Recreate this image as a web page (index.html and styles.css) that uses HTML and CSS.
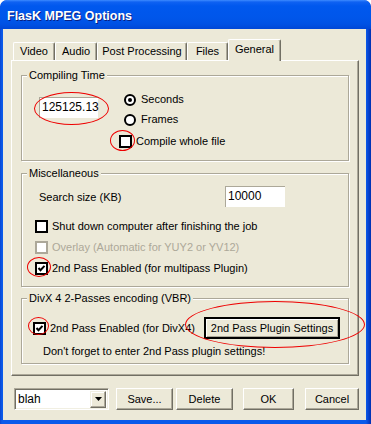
FILE: index.html
```html
<!DOCTYPE html>
<html>
<head>
<meta charset="utf-8">
<link rel="stylesheet" href="styles.css">
</head>
<body>
<div class="window">
  <div class="titlebar"><span class="title">FlasK MPEG Options</span></div>
  <div class="client">
    <div class="tabs">
      <div class="tab t-video">Video</div>
      <div class="tab t-audio">Audio</div>
      <div class="tab t-post">Post Processing</div>
      <div class="tab t-files">Files</div>
      <div class="tab t-general selected">General</div>
    </div>
    <div class="panel">
      <div class="group g1">
        <span class="glabel">Compiling Time</span>
        <div class="g1-body">
          <div class="edit time">125125.13</div>
          <div class="g1-col">
            <div class="opt radio-row r1"><span class="radio on"><span class="dot"></span></span><span>Seconds</span></div>
            <div class="opt radio-row r2"><span class="radio"></span><span>Frames</span></div>
            <div class="opt check-row r3"><span class="check"></span><span>Compile whole file</span></div>
          </div>
        </div>
      </div>
      <div class="group g2">
        <span class="glabel">Miscellaneous</span>
        <div class="search-row">
          <span>Search size (KB)</span>
          <div class="edit size">10000</div>
        </div>
        <div class="opt check-row c1"><span class="check"></span><span>Shut down computer after finishing the job</span></div>
        <div class="opt check-row c2 disabled"><span class="check"></span><span>Overlay (Automatic for YUY2 or YV12)</span></div>
        <div class="opt check-row c3"><span class="check"><svg width="9" height="9" viewBox="0 0 9 9"><polyline points="1.5,4 3.5,6.2 7.5,1.8" fill="none" stroke="#000" stroke-width="2"/></svg></span><span>2nd Pass Enabled (for multipass Plugin)</span></div>
      </div>
      <div class="group g3">
        <span class="glabel">DivX 4 2-Passes encoding (VBR)</span>
        <div class="divx-row">
          <div class="opt check-row"><span class="check"><svg width="9" height="9" viewBox="0 0 9 9"><polyline points="1.5,4 3.5,6.2 7.5,1.8" fill="none" stroke="#000" stroke-width="2"/></svg></span><span>2nd Pass Enabled (for DivX4)</span></div>
          <div class="btn plugin">2nd Pass Plugin Settings</div>
        </div>
        <div class="note">Don't forget to enter 2nd Pass plugin settings!</div>
      </div>
    </div>
    <div class="bottom">
      <div class="combo"><span class="combo-text">blah</span><span class="drop"><svg width="7" height="4" viewBox="0 0 7 4"><polygon points="0,0 7,0 3.5,4" fill="#000"/></svg></span></div>
      <div class="btn b-save">Save...</div>
      <div class="btn b-delete">Delete</div>
      <div class="btn b-ok">OK</div>
      <div class="btn b-cancel">Cancel</div>
    </div>
  </div>
  <span class="mark m1"></span>
  <span class="mark m2"></span>
  <span class="mark m3"></span>
  <span class="mark m4"></span>
  <span class="mark m5"></span>
</div>
</body>
</html>
```
FILE: styles.css
```css
* { box-sizing: border-box; }
html, body { margin: 0; padding: 0; background: #fff; }
body { font-family: "Liberation Sans", Arial, sans-serif; font-size: 11px; color: #000; }

.window {
  position: relative;
  width: 371px;
  height: 424px;
  display: flex;
  flex-direction: column;
  padding: 0 5px 4px 3px;
  background: linear-gradient(to right, #0a45d0 0, #0a5aea 2px, #0a5aea 366px, #0846d4 368px, #0030b0 371px);
  border-radius: 7px 7px 0 0;
  overflow: hidden;
}
.titlebar {
  height: 29px;
  margin: 0 -5px 0 -3px;
  padding: 3px 0 0 7px;
  display: flex;
  align-items: center;
  background: linear-gradient(to bottom, #3d8bff 0, #0f62f2 2px, #0058ee 6px, #0056ea 18px, #0052e4 24px, #0047d6 29px);
  border-radius: 7px 7px 0 0;
}
.title {
  color: #fff;
  font-weight: bold;
  font-size: 12.5px;
  letter-spacing: 0;
  text-shadow: 1px 1px 0 #0a1f80;
}
.client {
  flex: 1;
  background: #ece9d8;
  padding: 10px 0 0 0;
  display: flex;
  flex-direction: column;
}

/* tabs */
.tabs {
  display: flex;
  align-items: flex-end;
  height: 21px;
  margin-left: 10px;
  position: relative;
  z-index: 2;
}
.tab {
  height: 18px;
  line-height: 16px;
  text-align: center;
  background: #ece9d8;
  border-top: 1px solid #fff;
  border-left: 1px solid #fff;
  border-right: 1px solid #716f64;
  box-shadow: inset -1px 0 #aca899;
  border-radius: 2px 2px 0 0;
}
.t-video { width: 42px; }
.t-audio { width: 42px; }
.t-post { width: 90px; }
.t-files { width: 41px; }
.t-general { width: 53px; }
.tab.selected {
  height: 22px;
  margin-bottom: -1px;
  line-height: 18px;
}

.panel {
  margin-left: 8px;
  width: 348px;
  height: 316px;
  border: 1px solid;
  border-color: #fff #716f64 #716f64 #fff;
  box-shadow: inset -1px -1px #aca899;
  padding: 14px 9px 0 9px;
  display: flex;
  flex-direction: column;
  gap: 12px;
}

.group {
  width: 328px;
  border: 1px solid #aca899;
  box-shadow: inset 1px 1px #fff, 1px 1px #fff;
  display: flex;
  flex-direction: column;
}
.g1 { height: 86px; }
.g2 { height: 114px; }
.g3 { height: 66px; margin-top: -1px; }
.glabel {
  align-self: flex-start;
  margin: -7px 0 0 5px;
  padding: 0 2px;
  line-height: 13px;
  background: #ece9d8;
}

.edit {
  background: #fff;
  border-top: 1px solid #aca899;
  border-left: 1px solid #aca899;
  font-size: 11px;
  line-height: 19px;
  padding-left: 2px;
}

.g1-body { display: flex; }
.time {
  margin: 15px 0 0 17px;
  width: 59px;
  height: 21px;
  font-size: 12px;
}
.g1-col {
  margin: 11px 0 0 21px;
  display: flex;
  flex-direction: column;
}
.opt {
  display: flex;
  align-items: center;
  height: 13px;
  line-height: 13px;
  white-space: nowrap;
}
.radio-row { margin-left: 5px; gap: 5px; }
.r2 { margin-top: 7px; }
.r3 { margin-top: 9px; }
.radio {
  width: 12px;
  height: 12px;
  border-radius: 50%;
  border: 2px solid #000;
  background: #fff;
  display: flex;
  align-items: center;
  justify-content: center;
}
.dot { width: 4px; height: 4px; border-radius: 50%; background: #000; }
.check-row { gap: 4px; }
.check {
  width: 13px;
  height: 13px;
  border: 2px solid #000;
  background: #fff;
  display: flex;
  align-items: center;
  justify-content: center;
  flex: none;
}
.check svg { display: block; }
.disabled { color: #aca899; }
.disabled .check { border-color: #aca899; }

.search-row {
  display: flex;
  align-items: center;
  height: 21px;
  margin: 6px 0 0 17px;
}
.size {
  margin-left: auto;
  margin-right: 63px;
  width: 60px;
  height: 21px;
  font-size: 12px;
}
.c1 { margin: 13px 0 0 13px; }
.c2 { margin: 8px 0 0 13px; }
.c3 { margin: 8px 0 0 13px; }

.divx-row {
  display: flex;
  align-items: center;
  height: 22px;
  margin: 12px 0 0 11px;
}
.btn {
  height: 22px;
  display: flex;
  align-items: center;
  justify-content: center;
  background: #ece9d8;
  border: 1px solid;
  border-color: #fff #716f64 #716f64 #fff;
  box-shadow: inset -1px -1px #aca899;
  white-space: nowrap;
}
.plugin {
  margin-left: auto;
  margin-right: 8px;
  width: 136px;
  border: 2px solid #000;
  box-shadow: inset 1px 1px #fff, inset -1px -1px #aca899;
}
.note {
  margin: 6px 0 0 21px;
  line-height: 13px;
}

.bottom {
  display: flex;
  align-items: center;
  margin: 12px 0 0 11px;
  height: 22px;
}
.combo {
  width: 95px;
  height: 22px;
  background: #fff;
  border: 1px solid;
  border-color: #aca899 #fff #fff #aca899;
  box-shadow: inset 1px 1px #716f64, inset -1px -1px #f1efe2;
  display: flex;
  align-items: center;
  padding: 2px;
}
.combo-text { flex: 1; padding-left: 1px; font-size: 12px; }
.drop {
  width: 16px;
  height: 17px;
  background: #ece9d8;
  border: 1px solid;
  border-color: #f1efe2 #716f64 #716f64 #f1efe2;
  box-shadow: inset -1px -1px #aca899, inset 1px 1px #fff;
  display: flex;
  align-items: center;
  justify-content: center;
}
.drop svg { display: block; }
.b-save { width: 57px; margin-left: 7px; }
.b-delete { width: 57px; margin-left: 3px; }
.b-ok { width: 51px; margin-left: 10px; }
.b-cancel { width: 54px; margin-left: 11px; }

/* red annotation ellipses */
.mark {
  position: absolute;
  border: 1px solid #ee0000;
  border-radius: 50%;
  pointer-events: none;
}
.m1 { left: 34px; top: 92px; width: 75px; height: 33px; }
.m2 { left: 110px; top: 130px; width: 25px; height: 21px; }
.m3 { left: 27px; top: 257px; width: 24px; height: 20px; }
.m4 { left: 28px; top: 317px; width: 21px; height: 18px; }
.m5 { left: 185px; top: 301px; width: 180px; height: 47px; }
```
